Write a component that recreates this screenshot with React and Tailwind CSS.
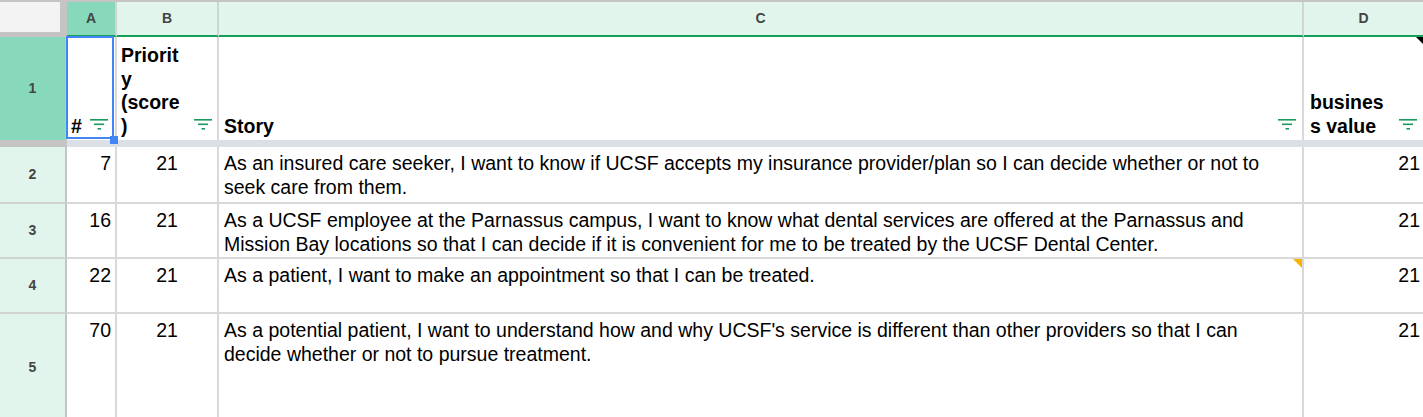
import React from "react";

const grid = "grid grid-cols-[67px_50px_102px_1085px_119px]";

const rows = [
  {
    n: 2,
    id: "7",
    score: "21",
    value: "21",
    h: "h-[57px]",
    story: [
      "As an insured care seeker, I want to know if UCSF accepts my insurance provider/plan so I can decide whether or not to",
      "seek care from them.",
    ],
  },
  {
    n: 3,
    id: "16",
    score: "21",
    value: "21",
    h: "h-[55px]",
    story: [
      "As a UCSF employee at the Parnassus campus, I want to know what dental services are offered at the Parnassus and",
      "Mission Bay locations so that I can decide if it is convenient for me to be treated by the UCSF Dental Center.",
    ],
  },
  {
    n: 4,
    id: "22",
    score: "21",
    value: "21",
    h: "h-[55px]",
    note: true,
    story: ["As a patient, I want to make an appointment so that I can be treated."],
  },
  {
    n: 5,
    id: "70",
    score: "21",
    value: "21",
    h: "h-[110px]",
    story: [
      "As a potential patient, I want to understand how and why UCSF's service is different than other providers so that I can",
      "decide whether or not to pursue treatment.",
    ],
  },
];

const FilterIcon = () => (
  <svg width="18" height="12" viewBox="0 0 18 12" className="shrink-0">
    <rect x="0" y="0" width="18" height="1.6" fill="#1a9a5c" />
    <rect x="4" y="4.5" width="10" height="1.6" fill="#1a9a5c" />
    <rect x="7.5" y="9" width="3.5" height="1.6" fill="#1a9a5c" />
  </svg>
);

const ColHead = ({ label, active }) => (
  <div
    className={`flex h-[35px] items-center justify-center border-r-2 border-b-2 border-r-[#cfd6d2] border-b-[#14a05a] text-[14px] font-bold text-[#444] ${
      active ? "bg-[#88d9bb]" : "bg-[#e2f5ec]"
    }`}
  >
    {label}
  </div>
);

// little folded-corner marker in a cell's top right
const Corner = ({ color, size }) => (
  <div
    className={`absolute right-0 top-0 h-0 w-0 border-l-transparent ${size}`}
    style={{ borderTopColor: color }}
  />
);

export default function App() {
  return (
    <div className="h-[417px] w-[1423px] overflow-hidden bg-white font-['Liberation_Sans',Arial,sans-serif] text-black">
      <div className="h-[2px] bg-[#c4c4c4]" />

      {/* column letters */}
      <div className={grid}>
        <div className="h-[35px] border-r-[7px] border-b-[5px] border-[#c4c4c4] bg-[#f3f3f3]" />
        <ColHead label="A" active />
        <ColHead label="B" />
        <ColHead label="C" />
        <div className="flex h-[35px] items-center justify-center border-b-2 border-b-[#14a05a] bg-[#e2f5ec] text-[14px] font-bold text-[#444]">
          D
        </div>
      </div>

      {/* frozen header row */}
      <div className={`${grid} h-[103px] text-[19.5px] font-bold leading-[23.5px]`}>
        <div className="flex items-center justify-center border-r-2 border-[#c4c4c4] bg-[#88d9bb] text-[14px] text-[#444]">
          1
        </div>
        <div className="relative flex items-end justify-between border-r-2 border-[#d9d9d9] pb-[2px] pl-[4px] pr-[7px]">
          <span>#</span>
          <span className="mb-[7px]">
            <FilterIcon />
          </span>
          <div className="absolute -left-px -top-px bottom-[1px] right-[1px] border-2 border-[#4285f4]" />
          <div className="absolute -bottom-[4px] right-[-3px] h-[8px] w-[8px] bg-[#4285f4]" />
        </div>
        <div className="flex items-end justify-between border-r-2 border-[#d9d9d9] pb-[2px] pl-[4px] pr-[5px]">
          <div>
            <div>Priorit</div>
            <div>y</div>
            <div>(score</div>
            <div>)</div>
          </div>
          <span className="mb-[7px]">
            <FilterIcon />
          </span>
        </div>
        <div className="flex items-end justify-between border-r-2 border-[#d9d9d9] pb-[2px] pl-[5px] pr-[6px]">
          <span>Story</span>
          <span className="mb-[7px]">
            <FilterIcon />
          </span>
        </div>
        <div className="relative flex items-end justify-between pb-[2px] pl-[6px] pr-[6px]">
          <div>
            <div>busines</div>
            <div>s value</div>
          </div>
          <span className="mb-[7px]">
            <FilterIcon />
          </span>
          <Corner color="#000" size="border-l-[7px] border-t-[7px]" />
        </div>
      </div>

      {/* freeze divider */}
      <div className={`${grid} h-[7px]`}>
        <div className="bg-[#c4c4c4]" />
        <div className="col-span-4 bg-[#dcdfe6]" />
      </div>

      {/* data rows */}
      {rows.map((r) => (
        <div key={r.n} className={`${grid} ${r.h} text-[19.5px] leading-[24px]`}>
          <div className="flex items-center justify-center border-r-2 border-b-2 border-r-[#c4c4c4] border-b-[#cfd3d1] bg-[#e2f5ec] pb-[2px] text-[14px] font-bold text-[#444]">
            {r.n}
          </div>
          <div className="border-r-2 border-b-2 border-[#d9d9d9] pr-[4px] pt-[4px] text-right">{r.id}</div>
          <div className="border-r-2 border-b-2 border-[#d9d9d9] pt-[4px] text-center">{r.score}</div>
          <div className="relative border-r-2 border-b-2 border-[#d9d9d9] pl-[5px] pt-[4px]">
            {r.story.map((line) => (
              <div key={line} className="whitespace-nowrap">
                {line}
              </div>
            ))}
            {r.note && <Corner color="#f6b400" size="border-l-[9px] border-t-[9px]" />}
          </div>
          <div className="border-b-2 border-[#d9d9d9] pr-[3px] pt-[4px] text-right">{r.value}</div>
        </div>
      ))}
    </div>
  );
}
